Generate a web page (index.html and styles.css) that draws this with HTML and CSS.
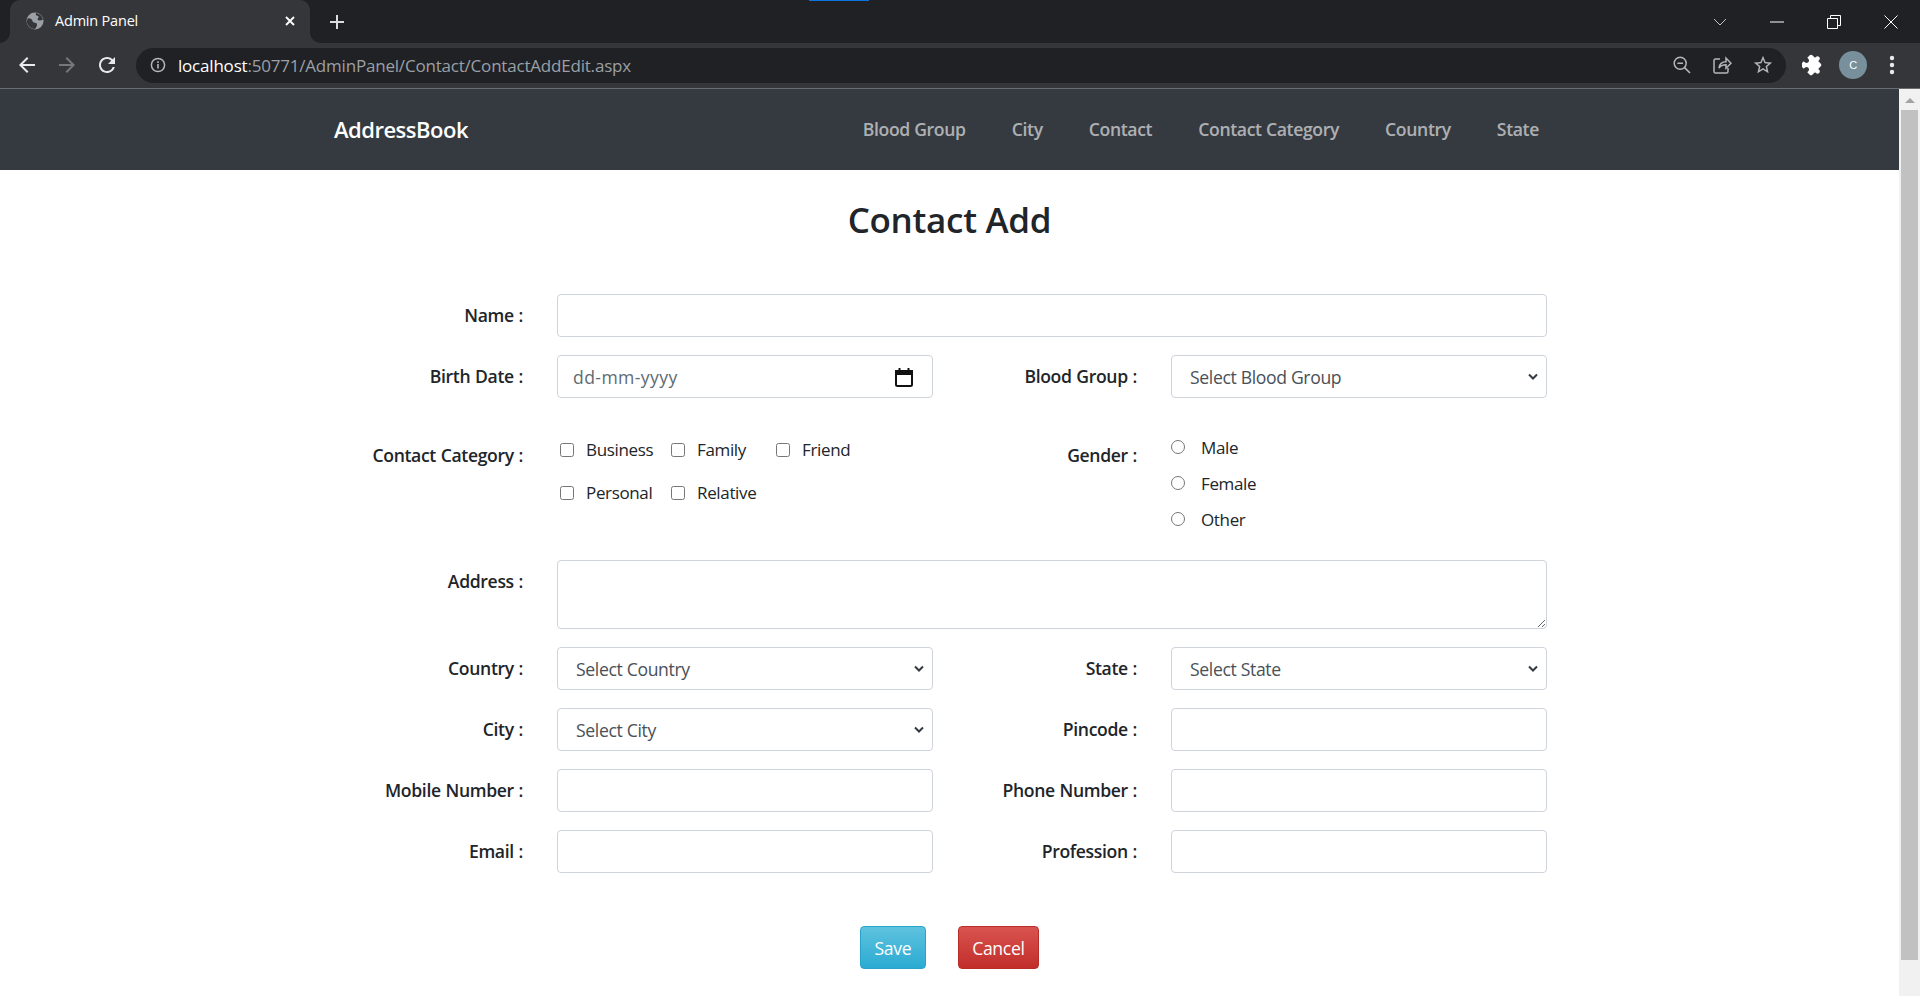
FILE: index.html
```html
<!DOCTYPE html>
<html lang="en">
<head>
  <meta charset="UTF-8">
  <title>Admin Panel</title>
  <link rel="stylesheet" href="styles.css">
</head>
<body>
  <div class="tabstrip">
    <div class="share-mark"></div>
    <div class="tab">
      <svg class="tab-globe" viewBox="0 0 18 18" width="18" height="18"><circle cx="9" cy="9" r="8.500" fill="#9aa0a6"/><path d="M1.500 6.500C4 6 6 7 6.500 9c.4 1.800 2.200 1.500 3.500 2 1.200.5 1.300 2 .6 3.500-.4 1-1 1.800-1.600 2.500C5 17 1 13.500.8 9.500zM10 1c-.5 1.500 0 2.700 1.300 2.800 1.500 0 1.700 1.500.7 2.400-.8.700-.5 1.800.7 2.100 1.500.3 3-.1 4.300-.8C16.500 4.500 13.500 1.300 10 1z" fill="#35363a"/></svg>
      <span class="tab-title">Admin Panel</span>
      <svg class="tab-close" viewBox="0 0 12 12" width="12" height="12"><path d="M2 2l8 8M10 2l-8 8" stroke="#fff" stroke-width="1.800"/></svg>
    </div>
    <svg class="new-tab" viewBox="0 0 16 16" width="16" height="16"><path d="M8 1v14M1 8h14" stroke="#dadce0" stroke-width="2"/></svg>
    <div class="window-btns">
      <svg class="win-chevron" viewBox="0 0 14 8" width="14" height="8"><path d="M1 1l6 6 6-6" fill="none" stroke="#c4c7c5" stroke-width="1"/></svg>
      <svg class="win-min" viewBox="0 0 14 14" width="14" height="14"><path d="M0 7h14" stroke="#fff" stroke-width="1"/></svg>
      <svg class="win-restore" viewBox="0 0 14 14" width="14" height="14"><path d="M.5 3.500h10v10H.5zM3.500 3.500v-3h10v10h-3" fill="none" stroke="#fff" stroke-width="1"/></svg>
      <svg class="win-close" viewBox="0 0 14 14" width="14" height="14"><path d="M.5.5l13 13M13.500.5l-13 13" stroke="#fff" stroke-width="1"/></svg>
    </div>
  </div>

  <div class="toolbar">
    <svg class="tool back" viewBox="0 0 24 24" width="24" height="24"><path fill="#e8eaed" d="M20 11H7.830l5.590-5.590L12 4l-8 8 8 8 1.410-1.410L7.830 13H20v-2z"/></svg>
    <svg class="tool forward" viewBox="0 0 24 24" width="24" height="24"><path fill="#75777a" d="M12 4l-1.410 1.410L16.170 11H4v2h12.170l-5.580 5.590L12 20l8-8z"/></svg>
    <svg class="tool reload" viewBox="0 0 24 24" width="24" height="24"><path fill="#e8eaed" d="M17.650 6.350A7.960 7.960 0 0 0 12 4c-4.420 0-7.990 3.580-7.990 8s3.570 8 7.990 8c3.730 0 6.840-2.550 7.730-6h-2.080A5.990 5.990 0 0 1 12 18c-3.310 0-6-2.690-6-6s2.690-6 6-6c1.660 0 3.140.69 4.220 1.780L13 11h7V4l-2.350 2.350z"/></svg>
    <div class="omnibox">
      <svg class="info" viewBox="0 0 16 16" width="16" height="16"><circle cx="8" cy="8" r="6.600" fill="none" stroke="#b4b6b9" stroke-width="1.500"/><path d="M8 7v4.500M8 4.300v1.600" stroke="#b4b6b9" stroke-width="1.600"/></svg>
      <span class="url"><span class="url-host">localhost</span>:50771/AdminPanel/Contact/ContactAddEdit.aspx</span>
      <svg class="omni-icon zoom-icon" viewBox="0 0 20 20" width="20" height="20"><circle cx="8.200" cy="8.200" r="6" fill="none" stroke="#b4b6b9" stroke-width="1.500"/><path d="M5.400 8.200h5.600M12.600 12.600l5.400 5.400" stroke="#b4b6b9" stroke-width="1.600"/></svg>
      <svg class="omni-icon share-icon" viewBox="0 0 20 20" width="20" height="20"><path d="M8 4H3.600A1.600 1.600 0 0 0 2 5.600v10.800A1.600 1.600 0 0 0 3.600 18h10.800a1.600 1.600 0 0 0 1.600-1.600V13M7 13c.5-4 3.400-6.300 7-6.300V3l5 5.200-5 5V9.800c-3 0-5.500 1-7 3.200z" fill="none" stroke="#b4b6b9" stroke-width="1.500"/></svg>
      <svg class="omni-icon star-icon" viewBox="0 0 24 24" width="22" height="22"><path fill="#b4b6b9" d="M22 9.240l-7.190-.62L12 2 9.190 8.630 2 9.240l5.460 4.730L5.820 21 12 17.270 18.180 21l-1.630-7.030L22 9.240zM12 15.400l-3.760 2.270 1-4.280-3.320-2.880 4.380-.38L12 6.100l1.710 4.040 4.380.38-3.320 2.880 1 4.280L12 15.400z"/></svg>
    </div>
    <svg class="puzzle" viewBox="0 0 24 24" width="22" height="22"><path fill="#fff" transform="rotate(45 12 12)" d="M20.500 11H19V7c0-1.100-.9-2-2-2h-4V3.500C13 2.120 11.880 1 10.500 1S8 2.120 8 3.500V5H4c-1.100 0-1.990.9-1.990 2v3.800H3.500c1.490 0 2.700 1.210 2.700 2.700s-1.210 2.700-2.700 2.700H2V20c0 1.100.9 2 2 2h3.800v-1.500c0-1.490 1.210-2.700 2.700-2.700 1.490 0 2.700 1.210 2.700 2.700V22H17c1.100 0 2-.9 2-2v-4h1.500c1.380 0 2.500-1.120 2.500-2.500S21.880 11 20.500 11z"/></svg>
    <div class="avatar">C</div>
    <svg class="dots" viewBox="0 0 6 20" width="6" height="20"><circle cx="3" cy="3" r="2.200" fill="#e8eaed"/><circle cx="3" cy="10" r="2.200" fill="#e8eaed"/><circle cx="3" cy="17" r="2.200" fill="#e8eaed"/></svg>
  </div>

  <div class="viewport">
    <div class="page">
      <nav class="navbar">
        <a class="brand" href="#">AddressBook</a>
        <div class="nav-links">
          <a href="#">Blood Group</a>
          <a href="#">City</a>
          <a href="#">Contact</a>
          <a href="#">Contact Category</a>
          <a href="#">Country</a>
          <a href="#">State</a>
        </div>
      </nav>

      <h1 class="page-title">Contact Add</h1>

      <form class="contact-form">
        <label class="form-label" for="name">Name :</label>
        <input class="form-control span-3" id="name" type="text">

        <label class="form-label" for="birth">Birth Date :</label>
        <div class="form-control date-control">
          <span id="birth">dd-mm-yyyy</span>
          <svg viewBox="0 0 20 20" width="20" height="20"><path d="M2 5.500A1.500 1.500 0 0 1 3.500 4h13A1.500 1.500 0 0 1 18 5.500v12a1.500 1.500 0 0 1-1.500 1.500h-13A1.500 1.500 0 0 1 2 17.500z" fill="none" stroke="#111" stroke-width="2"/><path d="M2 4h16v3H2zM5.500 1v3M14.500 1v3" fill="#111" stroke="#111" stroke-width="2"/></svg>
        </div>
        <label class="form-label" for="blood">Blood Group :</label>
        <select class="form-control" id="blood"><option>Select Blood Group</option></select>

        <div class="form-label label-top">Contact Category :</div>
        <div class="check-list">
          <label class="check"><input type="checkbox">Business</label>
          <label class="check"><input type="checkbox">Family</label>
          <label class="check"><input type="checkbox">Friend</label>
          <label class="check"><input type="checkbox">Personal</label>
          <label class="check"><input type="checkbox">Relative</label>
        </div>
        <div class="form-label label-top">Gender :</div>
        <div class="radio-list">
          <label class="radio"><input type="radio" name="gender">Male</label>
          <label class="radio"><input type="radio" name="gender">Female</label>
          <label class="radio"><input type="radio" name="gender">Other</label>
        </div>

        <label class="form-label label-address" for="address">Address :</label>
        <textarea class="form-control span-3 address" id="address"></textarea>

        <label class="form-label" for="country">Country :</label>
        <select class="form-control" id="country"><option>Select Country</option></select>
        <label class="form-label" for="state">State :</label>
        <select class="form-control" id="state"><option>Select State</option></select>

        <label class="form-label" for="city">City :</label>
        <select class="form-control" id="city"><option>Select City</option></select>
        <label class="form-label" for="pincode">Pincode :</label>
        <input class="form-control" id="pincode" type="text">

        <label class="form-label" for="mobile">Mobile Number :</label>
        <input class="form-control" id="mobile" type="text">
        <label class="form-label" for="phone">Phone Number :</label>
        <input class="form-control" id="phone" type="text">

        <label class="form-label" for="email">Email :</label>
        <input class="form-control" id="email" type="text">
        <label class="form-label" for="profession">Profession :</label>
        <input class="form-control" id="profession" type="text">
      </form>

      <div class="form-actions">
        <button class="btn btn-save" type="button">Save</button>
        <button class="btn btn-cancel" type="button">Cancel</button>
      </div>
    </div>

    <div class="scrollbar">
      <div class="scroll-arrow"></div>
      <div class="scroll-thumb"></div>
    </div>
  </div>
</body>
</html>
```

FILE: styles.css
```css
* {
  box-sizing: border-box;
}
html, body {
  height: 100%;
}
body {
  margin: 0;
  display: flex;
  flex-direction: column;
  overflow: hidden;
  font-family: "Open Sans", "Noto Sans", sans-serif;
  font-size: 16px;
  letter-spacing: -0.35px;
  color: #212529;
  background: #fff;
}

/* browser top */
.tabstrip {
  position: relative;
  flex: none;
  display: flex;
  align-items: center;
  height: 43px;
  padding-left: 10px;
  background: #202124;
}
.share-mark {
  position: absolute;
  top: 0;
  left: 809px;
  width: 60px;
  height: 1px;
  background: #0b74e0;
}
.tab {
  position: relative;
  display: flex;
  align-items: center;
  width: 300px;
  height: 43px;
  padding: 0 14px 2px 16px;
  background: #35363a;
  border-radius: 10px 10px 0 0;
}
.tab::before, .tab::after {
  content: "";
  position: absolute;
  bottom: 0;
  width: 10px;
  height: 10px;
}
.tab::before {
  left: -10px;
  background: radial-gradient(circle at 0 0, #202124 9.500px, #35363a 10px);
}
.tab::after {
  right: -10px;
  background: radial-gradient(circle at 100% 0, #202124 9.500px, #35363a 10px);
}
.tab-title {
  flex: 1;
  margin-left: 11px;
  color: #fff;
  font-size: 14.500px;
  letter-spacing: -0.2px;
}
.new-tab {
  margin-left: 19px;
}
.window-btns {
  display: flex;
  align-items: center;
  margin-left: auto;
  padding-right: 22px;
}
.win-chevron {
  margin-right: 43px;
}
.win-min, .win-restore {
  margin-right: 43px;
}

.toolbar {
  flex: none;
  display: flex;
  align-items: center;
  height: 46px;
  padding: 0 25px 1px 15px;
  background: #35363a;
  border-bottom: 1px solid #6b6c6f;
}
.tool {
  margin-right: 16px;
}
.omnibox {
  display: flex;
  align-items: center;
  flex: 1;
  height: 35px;
  margin-left: 1px;
  padding: 0 12px 0 14px;
  background: #202124;
  border-radius: 18px;
}
.url {
  flex: 1;
  margin-left: 12px;
  color: #9aa0a6;
  font-size: 17px;
  letter-spacing: -0.2px;
}
.url-host {
  color: #fff;
}
.omni-icon {
  margin-left: 20px;
}
.puzzle {
  margin-left: 16px;
}
.avatar {
  width: 28px;
  height: 28px;
  margin-left: 15px;
  border-radius: 50%;
  background: #78909c;
  color: #fff;
  font-family: "Liberation Sans", sans-serif;
  font-size: 11px;
  line-height: 28px;
  text-align: center;
}
.dots {
  margin-left: 22px;
}

/* page */
.viewport {
  flex: 1;
  display: flex;
  min-height: 0;
}
.page {
  flex: 1;
  min-width: 0;
}
.navbar {
  display: flex;
  align-items: center;
  justify-content: space-between;
  height: 81px;
  padding: 0 360px 1px 334px;
  background: #343a40;
}
.brand {
  color: #fff;
  font-size: 22px;
  font-weight: 600;
  letter-spacing: -0.5px;
  text-decoration: none;
}
.nav-links {
  display: flex;
  gap: 46px;
}
.nav-links a {
  color: rgba(255,255,255,.62);
  font-size: 17.6px;
  font-weight: 600;
  text-decoration: none;
}
.page-title {
  margin: 27px 0 51px;
  font-size: 35px;
  font-weight: 600;
  line-height: 46px;
  text-align: center;
  letter-spacing: -0.3px;
}

/* form */
.contact-form {
  display: grid;
  grid-template-columns: 200px 376px 170px 376px;
  column-gap: 34px;
  row-gap: 18px;
  align-items: center;
  padding-left: 323px;
  font-size: 17.6px;
}
.form-label {
  padding-bottom: 2px;
  font-weight: 600;
  text-align: right;
  word-spacing: 0.5px;
}
.label-top {
  align-self: start;
  padding-top: 27px;
}
.label-address {
  align-self: start;
  padding-top: 9px;
}
.form-control {
  display: block;
  width: 100%;
  height: 43px;
  padding: 0 15px;
  border: 1px solid #ced4da;
  border-radius: 4px;
  background: #fff;
  color: #495057;
  font: inherit;
  letter-spacing: inherit;
}
select.form-control {
  padding-left: 18px;
  appearance: none;
  background: #fff url("data:image/svg+xml,%3Csvg xmlns='http://www.w3.org/2000/svg' width='10' height='7' viewBox='0 0 10 7'%3E%3Cpath d='M1 1.500l4 4 4-4' fill='none' stroke='%23343a40' stroke-width='2'/%3E%3C/svg%3E") no-repeat right 8px center;
}
.span-3 {
  grid-column: span 3;
}
.address {
  height: 69px;
}
.date-control {
  display: flex;
  align-items: center;
  justify-content: space-between;
  padding-right: 18px;
}
.date-control span {
  color: #5f6a73;
  letter-spacing: 0.4px;
}
.check-list {
  display: grid;
  grid-template-columns: 111px 105px auto;
  grid-auto-rows: 43px;
  align-items: center;
  align-self: start;
  padding: 12px 0 0 3px;
  height: 126px;
}
.check, .radio {
  display: flex;
  align-items: center;
  font-size: 17px;
}
.check input, .radio input {
  width: 14px;
  height: 14px;
  margin: 0;
}
.check input {
  margin-right: 12px;
}
.radio input {
  margin-right: 16px;
}
.radio-list {
  align-self: start;
  padding-top: 13px;
}
.radio {
  height: 36px;
}

.form-actions {
  display: flex;
  justify-content: center;
  gap: 32px;
  margin-top: 53px;
}
.btn {
  height: 43px;
  padding: 0 13.500px;
  border-radius: 4px;
  color: #fff;
  font: inherit;
  font-size: 17.6px;
  letter-spacing: -0.35px;
}
.btn-save {
  background: linear-gradient(#5fc2df, #2aabd2);
  border: 1px solid #28a4c9;
}
.btn-cancel {
  background: linear-gradient(#d9534f, #c12e2a);
  border: 1px solid #b92c28;
}

/* scrollbar */
.scrollbar {
  flex: none;
  width: 21px;
  padding: 0 2px;
  background: #f1f1f1;
}
.scroll-arrow {
  width: 0;
  height: 0;
  margin: 9px auto 7px;
  border-left: 5px solid transparent;
  border-right: 5px solid transparent;
  border-bottom: 5px solid #a3a3a3;
}
.scroll-thumb {
  height: 850px;
  background: #c1c1c1;
}
```
